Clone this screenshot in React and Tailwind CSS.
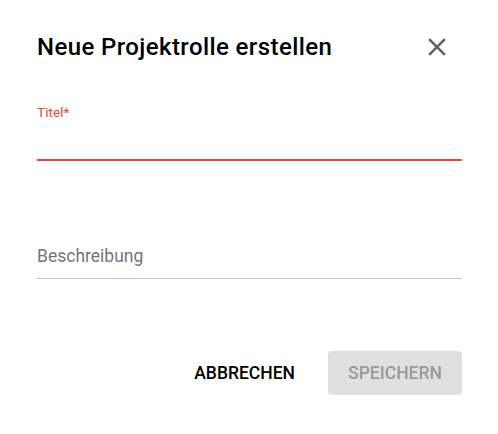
import React from "react";

const CloseIcon = () => (
  <svg width="30" height="30" viewBox="0 0 24 24" fill="#616161">
    <path d="M19 6.41L17.59 5 12 10.59 6.41 5 5 6.41 10.59 12 5 17.59 6.41 19 12 13.41 17.59 19 19 17.59 13.41 12z" />
  </svg>
);

const App = () => {
  return (
    <div
      className="w-[498px] h-[434px] bg-white pl-[37px] pr-[36px] pt-[31px] flex flex-col"
      style={{ fontFamily: "Roboto, 'Liberation Sans', sans-serif" }}
    >
      <div className="flex items-center justify-between h-[32px]">
        <h2 className="text-[24px] leading-[32px] font-medium tracking-[0.4px] text-black">
          Neue Projektrolle erstellen
        </h2>
        <button className="w-[30px] h-[30px] mr-[10px] flex items-center justify-center">
          <CloseIcon />
        </button>
      </div>

      <div className="mt-[40px] flex flex-col">
        <label className="text-[13.7px] leading-[18px] text-[#f44336]">
          Titel*
        </label>
        <div className="h-[38px] border-b-2 border-[#f44336] box-content"></div>
      </div>

      <div className="mt-[83px] flex flex-col border-b border-[#c4c4c4] pb-[10px]">
        <span className="text-[17.5px] leading-[24px] text-[#757575]">
          Beschreibung
        </span>
      </div>

      <div className="mt-[72px] flex justify-end items-center gap-[13px]">
        <button className="h-[44px] px-5 text-[17.5px] font-medium text-black uppercase">
          Abbrechen
        </button>
        <button className="h-[44px] w-[134px] rounded bg-[#e0e0e0] text-[17.5px] font-medium text-[#9a9a9a] uppercase">
          Speichern
        </button>
      </div>
    </div>
  );
};

export default App;
